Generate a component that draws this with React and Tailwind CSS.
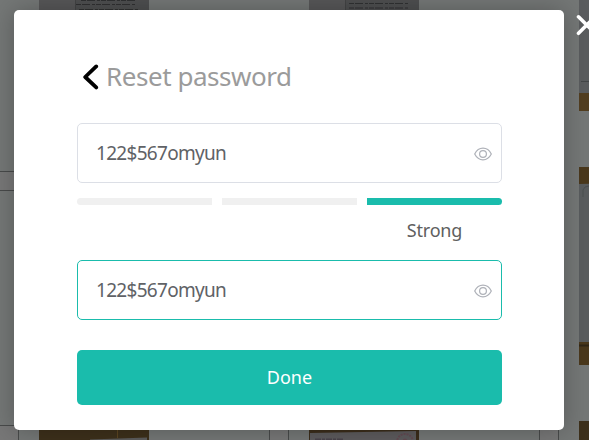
function Eye() {
  return (
    <svg className="mt-px h-[18px] w-[18px] shrink-0" viewBox="0 0 18 18" fill="none" stroke="#aeb1b8" strokeWidth="1.2">
      <path d="M0.7 9C2.6 5.2 5.5 3.2 9 3.2S15.4 5.2 17.3 9C15.4 12.8 12.5 14.8 9 14.8S2.6 12.8 0.7 9Z" />
      <circle cx="9" cy="9" r="3.4" />
    </svg>
  );
}

function Field({ value, active }) {
  return (
    <div
      className={
        "flex h-[60px] items-center justify-between rounded-[5px] border bg-white pl-[18px] pr-[9px] " +
        (active ? "border-[#1abcac]" : "border-[#dcdfe6]")
      }
    >
      <span className="text-[19px] leading-6 tracking-[-0.7px] text-[#606266]">{value}</span>
      <Eye />
    </div>
  );
}

function Scan({ kind }) {
  if (kind === "page" || kind === "letter") {
    return (
      <svg className="h-[198px] w-[110px] shrink-0" viewBox="0 0 110 198">
        <rect width="110" height="198" fill="#4e4f50" />
        <rect width="36" height="198" fill="#575758" />
        {kind === "page" ? (
          <path d="M42 87.5H96M37 91.5H96M40 96.5H100" stroke="#303132" strokeDasharray="5 1 8 2 3 1" />
        ) : (
          <path d="M40 90.5H100M40 95H100" stroke="#303132" strokeDasharray="5 1 8 2 3 1" />
        )}
        <path d="M36.5 80V110" stroke="#434445" />
      </svg>
    );
  }
  if (kind === "sheet") {
    return (
      <svg className="h-[198px] w-[110px] shrink-0" viewBox="0 0 110 198">
        <rect width="110" height="198" fill="#523e20" />
        <path d="M0 0H110V180H0Z" fill="#5a5c5e" />
        <path d="M2 168.5H110" stroke="#434647" />
      </svg>
    );
  }
  if (kind === "desk") {
    return (
      <svg className="h-[198px] w-[110px] shrink-0" viewBox="0 0 110 198">
        <rect width="110" height="198" fill="#4a381c" />
        <path d="M0 17L110 15V175H0Z" fill="#595c5e" />
        <path d="M0 178.5H110" stroke="#302617" strokeWidth="2" />
        <path d="M4 30V23Q5 19 10 19" stroke="#4b4e50" fill="none" />
      </svg>
    );
  }
  if (kind === "card") {
    return (
      <svg className="h-[198px] w-[110px] shrink-0" viewBox="0 0 110 198">
        <rect width="110" height="198" fill="#3b2d1b" />
        <path d="M1 12L107 10V198H1Z" fill="#5d5b5d" />
        <path d="M6 18.5H34" stroke="#49434a" strokeWidth="2" strokeDasharray="6 1 3 1" />
        <circle cx="96" cy="21" r="8" fill="none" stroke="#644a52" strokeWidth="2" strokeDasharray="2 1" />
        <circle cx="96" cy="20" r="2.5" fill="#644a52" />
      </svg>
    );
  }
  return (
    <svg className="h-[198px] w-[110px] shrink-0" viewBox="0 0 110 198">
      <rect width="110" height="198" fill="#3d301b" />
      <path d="M78.5 0V17" stroke="#5c4521" />
      <path d="M51 18.5L108 16.5V198H51Z" fill="#5c5c5c" />
    </svg>
  );
}

const rows = [
  ["page", "letter", "sheet"],
  ["desk", "desk", "desk"],
  ["wood", "card", "wood"],
];

function Gallery() {
  return (
    <div className="absolute -left-px -top-[87px] flex flex-col gap-14">
      {rows.map((row, r) => (
        <div key={r} className="flex gap-[120px]">
          {row.map((kind, c) => (
            <div key={c} className="flex w-[150px] gap-5">
              <div className="mt-1 h-5 w-5 shrink-0 border border-[#484a4a] bg-[#777777]" />
              <Scan kind={kind} />
            </div>
          ))}
        </div>
      ))}
    </div>
  );
}

export default function App() {
  return (
    <div className="relative h-[440px] w-[589px] overflow-hidden bg-[#747776] pl-[14px] pt-[10px] font-['Noto_Sans','Open_Sans',sans-serif]">
      <Gallery />
      <div className="relative h-[420px] w-[550px] rounded-[5px] bg-white pl-[63px] pr-[62px] pt-[46px] shadow-[0_0_24px_rgba(0,0,0,0.25)]">
        <div className="flex h-[42px] items-center gap-[7px] pl-[6px]">
          <svg className="h-[26px] w-4 shrink-0" viewBox="0 0 16 26" fill="none" stroke="#000" strokeWidth="3.8" strokeLinecap="round" strokeLinejoin="round">
            <path d="M13.2 2.4L2.2 13L13.2 23.4" />
          </svg>
          <h1 className="-mt-0.5 text-[26px] leading-[42px] tracking-[-0.45px] text-[#9b9b9b]">Reset password</h1>
        </div>
        <div className="mt-[25px]">
          <Field value="122$567omyun" />
        </div>
        <div className="mt-[15px] grid grid-cols-3 gap-[10px]">
          <div className="h-[7px] rounded-l-[4px] bg-[#f0f0f0]" />
          <div className="h-[7px] bg-[#f0f0f0]" />
          <div className="h-[7px] rounded-r-[4px] bg-[#1abcac]" />
        </div>
        <div className="mt-[11px] flex h-7 justify-end">
          <span className="w-[135px] text-center text-[18px] leading-7 tracking-[-0.2px] text-[#606060]">Strong</span>
        </div>
        <div className="mt-4">
          <Field value="122$567omyun" active />
        </div>
        <button className="mt-[30px] block h-[55px] w-full rounded-[5px] bg-[#1abcac] text-[18px] text-white">Done</button>
      </div>
      <svg className="absolute left-[576px] top-[14px] h-[22px] w-[22px]" viewBox="0 0 22 22" stroke="#fff" strokeWidth="3.6" strokeLinecap="round">
        <path d="M2.5 2.8L19 19.3M2.5 19.3L19 2.8" />
      </svg>
    </div>
  );
}
